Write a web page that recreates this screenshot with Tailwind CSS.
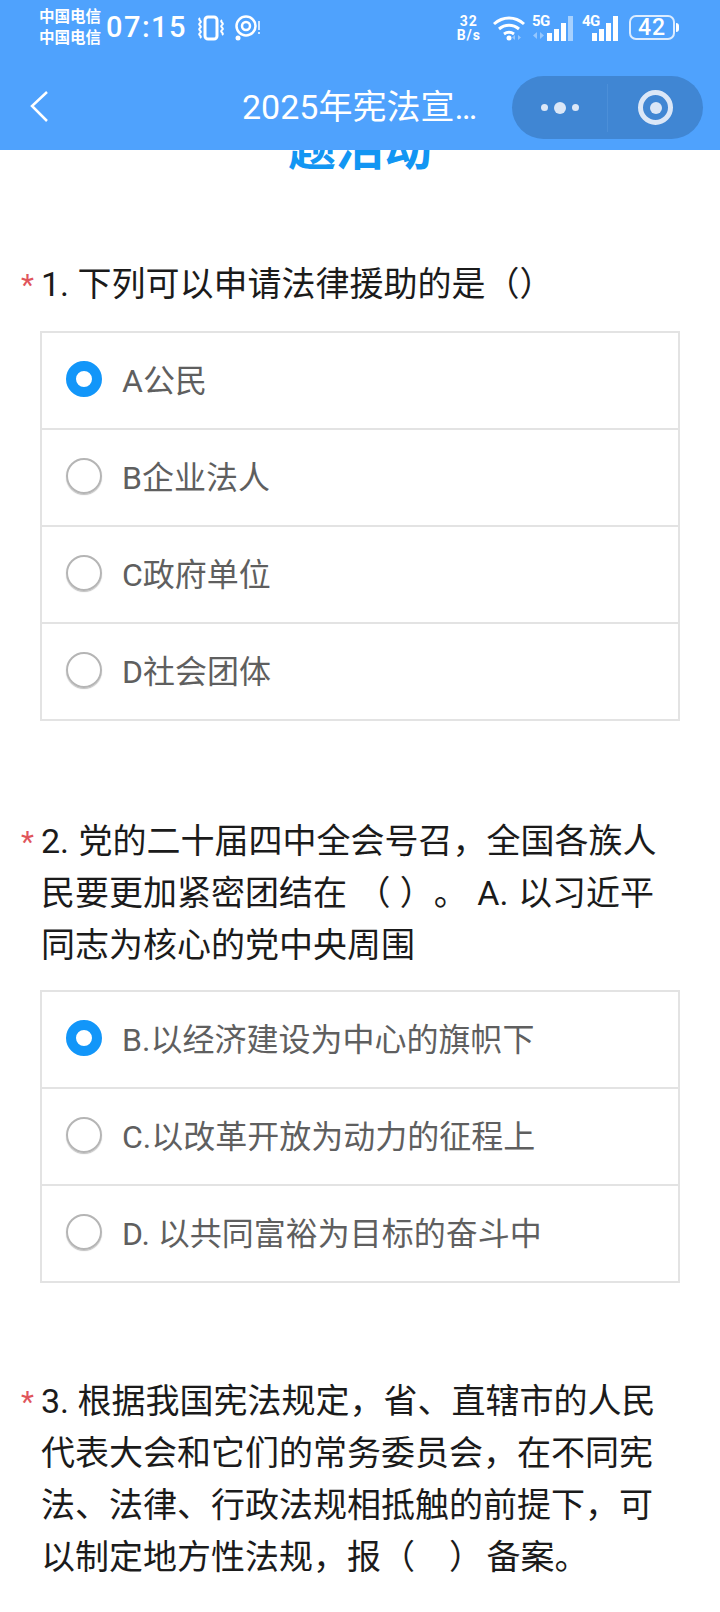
<!DOCTYPE html>
<html lang="zh">
<head>
    <meta charset="UTF-8">
    <meta name="viewport" content="width=device-width, initial-scale=1.0">
    <title>2025年宪法宣传周</title>
    <script src="https://cdn.jsdelivr.net/npm/@tailwindcss/browser@4"></script>
</head>
<body class="bg-white font-['Roboto','Noto_Sans_CJK_SC',sans-serif] overflow-hidden h-[1612px] [text-spacing-trim:space-all]">

    <!-- Header -->
    <header class="relative z-10 h-[150px] bg-[#4fa2fd] text-white">
        <!-- Status bar -->
        <div class="flex items-center h-[54px] pt-[1px] pl-[39px] pr-[41px]">
            <div class="flex flex-col text-[15.5px] leading-[21px] font-bold w-[66px]">
                <span>中国电信</span>
                <span>中国电信</span>
            </div>
            <span class="ml-[1px] text-[29px] font-medium tracking-[1.5px] leading-none">07:15</span>
            <svg class="ml-[8px]" width="32" height="26" viewBox="0 0 32 26" fill="none" stroke="white">
                <rect x="10" y="2" width="12" height="22" rx="3" stroke-width="3"/>
                <path d="M5 3c-3 2 3 3 0 5s3 3 0 5 3 3 0 5 3 3 0 5M27 5c-3 2 3 3 0 5s3 3 0 5 3 3 0 5" stroke-width="2"/>
            </svg>
            <svg class="ml-[8px]" width="26" height="26" viewBox="0 0 26 26" fill="none" stroke="white">
                <circle cx="11" cy="11" r="9.500" stroke-width="2.500"/>
                <circle cx="11" cy="11" r="4" stroke-width="2.500"/>
                <circle cx="3" cy="23" r="2.500" fill="white" stroke="none"/>
                <path d="M24 6v9M24 17v2" stroke-width="1.500"/>
            </svg>
            <div class="ml-auto flex items-center">
                <div class="flex flex-col items-center text-[14px] leading-[14px] font-bold tracking-[1px]">
                    <span>32</span>
                    <span>B/s</span>
                </div>
                <svg class="ml-[12px]" width="32" height="26" viewBox="0 0 32 26" fill="none" stroke="white" stroke-width="3">
                    <path d="M1 9c9-8 21-8 30 0M6 14c6-5 14-5 20 0M11 19c3-2 7-2 10 0"/>
                    <circle cx="16" cy="23" r="2.500" fill="white" stroke="none"/>
                    <path d="M22 20v5l-3-2.500zM25 20v5l3-2.500z" fill="white" fill-opacity="0.4" stroke="none"/>
                </svg>
                <div class="ml-[7px] relative w-[41px] h-[26px]">
                    <span class="absolute left-0 -top-[1px] text-[15px] font-bold leading-none tracking-[-0.5px]">5G</span>
                    <svg class="absolute left-[1px] bottom-[2px]" width="11" height="7" viewBox="0 0 11 7" fill="white" fill-opacity="0.4">
                        <path d="M4 0v7L0 3.500zM7 0v7l4-3.500z"/>
                    </svg>
                    <div class="absolute right-0 bottom-0 flex items-end gap-[2px]">
                        <i class="block w-[5px] h-[8px] bg-white"></i>
                        <i class="block w-[5px] h-[12px] bg-white"></i>
                        <i class="block w-[5px] h-[18px] bg-white"></i>
                        <i class="block w-[5px] h-[25px] bg-white/50"></i>
                    </div>
                </div>
                <div class="ml-[9px] relative w-[36px] h-[26px]">
                    <span class="absolute left-0 -top-[1px] text-[15px] font-bold leading-none tracking-[-0.5px]">4G</span>
                    <div class="absolute right-0 bottom-0 flex items-end gap-[2px]">
                        <i class="block w-[5px] h-[8px] bg-white"></i>
                        <i class="block w-[5px] h-[12px] bg-white"></i>
                        <i class="block w-[5px] h-[18px] bg-white"></i>
                        <i class="block w-[5px] h-[25px] bg-white"></i>
                    </div>
                </div>
                <div class="ml-[11px] flex items-center">
                    <div class="w-[46px] h-[25px] rounded-[7px] border-2 border-white/80 flex items-center justify-center text-[23px] font-medium leading-none tracking-[1px]">42</div>
                    <i class="block ml-[1px] w-[3px] h-[9px] rounded-r-full bg-white"></i>
                </div>
            </div>
        </div>
        <!-- Nav bar -->
        <div class="relative h-[96px]">
            <svg class="absolute left-[29px] top-[36px]" width="22" height="32" viewBox="0 0 22 32" fill="none" stroke="white" stroke-width="2.500">
                <path d="M18 2 3 16l15 15"/>
            </svg>
            <div class="absolute left-[242px] top-[29px] text-[34px] leading-[48px] whitespace-nowrap">2025年宪法宣…</div>
            <div class="absolute left-[512px] top-[22px] w-[191px] h-[63px] rounded-full bg-[#4086d3] flex items-center">
                <div class="w-[95px] flex items-center justify-center gap-[6px]">
                    <i class="block w-[7px] h-[7px] rounded-full bg-[#dbe7f7]"></i>
                    <i class="block w-[12px] h-[12px] rounded-full bg-[#dbe7f7]"></i>
                    <i class="block w-[7px] h-[7px] rounded-full bg-[#dbe7f7]"></i>
                </div>
                <div class="w-[1px] h-[48px] bg-[#4c8fd8]"></div>
                <div class="flex-1 flex items-center justify-center">
                    <div class="w-[35px] h-[35px] rounded-full border-[5px] border-[#dbe7f7] flex items-center justify-center">
                        <i class="block w-[12px] h-[12px] rounded-full bg-[#dbe7f7]"></i>
                    </div>
                </div>
            </div>
        </div>
    </header>

    <!-- Main -->
    <main>
        <!-- page title is scrolled mostly under the header -->
        <div class="h-[29px] overflow-hidden">
            <h1 class="-mt-[31px] text-center text-[48px] leading-[60px] font-bold text-[#1296f3]">题活动</h1>
        </div>

        <section class="mt-[79px]">
            <div class="flex pl-[21px] pr-[40px]">
                <span class="w-[20px] shrink-0 text-[#e0555c] text-[30px] leading-[54px]">*</span>
                <h2 class="text-[34px] leading-[52px] text-[#1b1b1b]">1. 下列可以申请法律援助的是（）</h2>
            </div>
            <ul class="mt-[19px] mx-[40px] border-2 border-[#e3e3e3] divide-y-2 divide-[#e3e3e3] text-[32px] text-[#5f5f5f]">
                <li class="h-[97px] flex items-center pl-[24px]">
                    <i class="block mb-[3px] w-[36px] h-[36px] rounded-full border-[10px] border-[#1296f9]"></i>
                    <span class="ml-[20px] pt-[1px]">A公民</span>
                </li>
                <li class="h-[97px] flex items-center pl-[24px]">
                    <i class="block mb-[3px] w-[36px] h-[36px] rounded-full border-2 border-[#b5b5b5] shadow-[0_1px_1px_rgba(0,0,0,0.25)]"></i>
                    <span class="ml-[20px] pt-[1px]">B企业法人</span>
                </li>
                <li class="h-[97px] flex items-center pl-[24px]">
                    <i class="block mb-[3px] w-[36px] h-[36px] rounded-full border-2 border-[#b5b5b5] shadow-[0_1px_1px_rgba(0,0,0,0.25)]"></i>
                    <span class="ml-[20px] pt-[1px]">C政府单位</span>
                </li>
                <li class="h-[95px] flex items-center pl-[24px]">
                    <i class="block mb-[3px] w-[36px] h-[36px] rounded-full border-2 border-[#b5b5b5] shadow-[0_1px_1px_rgba(0,0,0,0.25)]"></i>
                    <span class="ml-[20px] pt-[1px]">D社会团体</span>
                </li>
            </ul>
        </section>

        <section class="mt-[94px]">
            <div class="flex pl-[21px] pr-[40px]">
                <span class="w-[20px] shrink-0 text-[#e0555c] text-[30px] leading-[54px]">*</span>
                <h2 class="text-[34px] leading-[52px] text-[#1b1b1b] [word-spacing:1px]">2. 党的二十届四中全会号召，全国各族人民要更加紧密团结在 （ ）。 A. 以习近平同志为核心的党中央周围</h2>
            </div>
            <ul class="mt-[19px] mx-[40px] border-2 border-[#e3e3e3] divide-y-2 divide-[#e3e3e3] text-[32px] text-[#5f5f5f]">
                <li class="h-[97px] flex items-center pl-[24px]">
                    <i class="block mb-[3px] w-[36px] h-[36px] rounded-full border-[10px] border-[#1296f9]"></i>
                    <span class="ml-[20px] pt-[1px]">B.以经济建设为中心的旗帜下</span>
                </li>
                <li class="h-[97px] flex items-center pl-[24px]">
                    <i class="block mb-[3px] w-[36px] h-[36px] rounded-full border-2 border-[#b5b5b5] shadow-[0_1px_1px_rgba(0,0,0,0.25)]"></i>
                    <span class="ml-[20px] pt-[1px]">C.以改革开放为动力的征程上</span>
                </li>
                <li class="h-[95px] flex items-center pl-[24px]">
                    <i class="block mb-[3px] w-[36px] h-[36px] rounded-full border-2 border-[#b5b5b5] shadow-[0_1px_1px_rgba(0,0,0,0.25)]"></i>
                    <span class="ml-[20px] pt-[1px]">D. 以共同富裕为目标的奋斗中</span>
                </li>
            </ul>
        </section>

        <section class="mt-[92px]">
            <div class="flex pl-[21px] pr-[40px]">
                <span class="w-[20px] shrink-0 text-[#e0555c] text-[30px] leading-[54px]">*</span>
                <h2 class="text-[34px] leading-[52px] text-[#1b1b1b]">3. 根据我国宪法规定，省、直辖市的人民代表大会和它们的常务委员会，在不同宪法、法律、行政法规相抵触的前提下，可以制定地方性法规，报（　）&#8202;备案。</h2>
            </div>
        </section>
    </main>
</body>
</html>
